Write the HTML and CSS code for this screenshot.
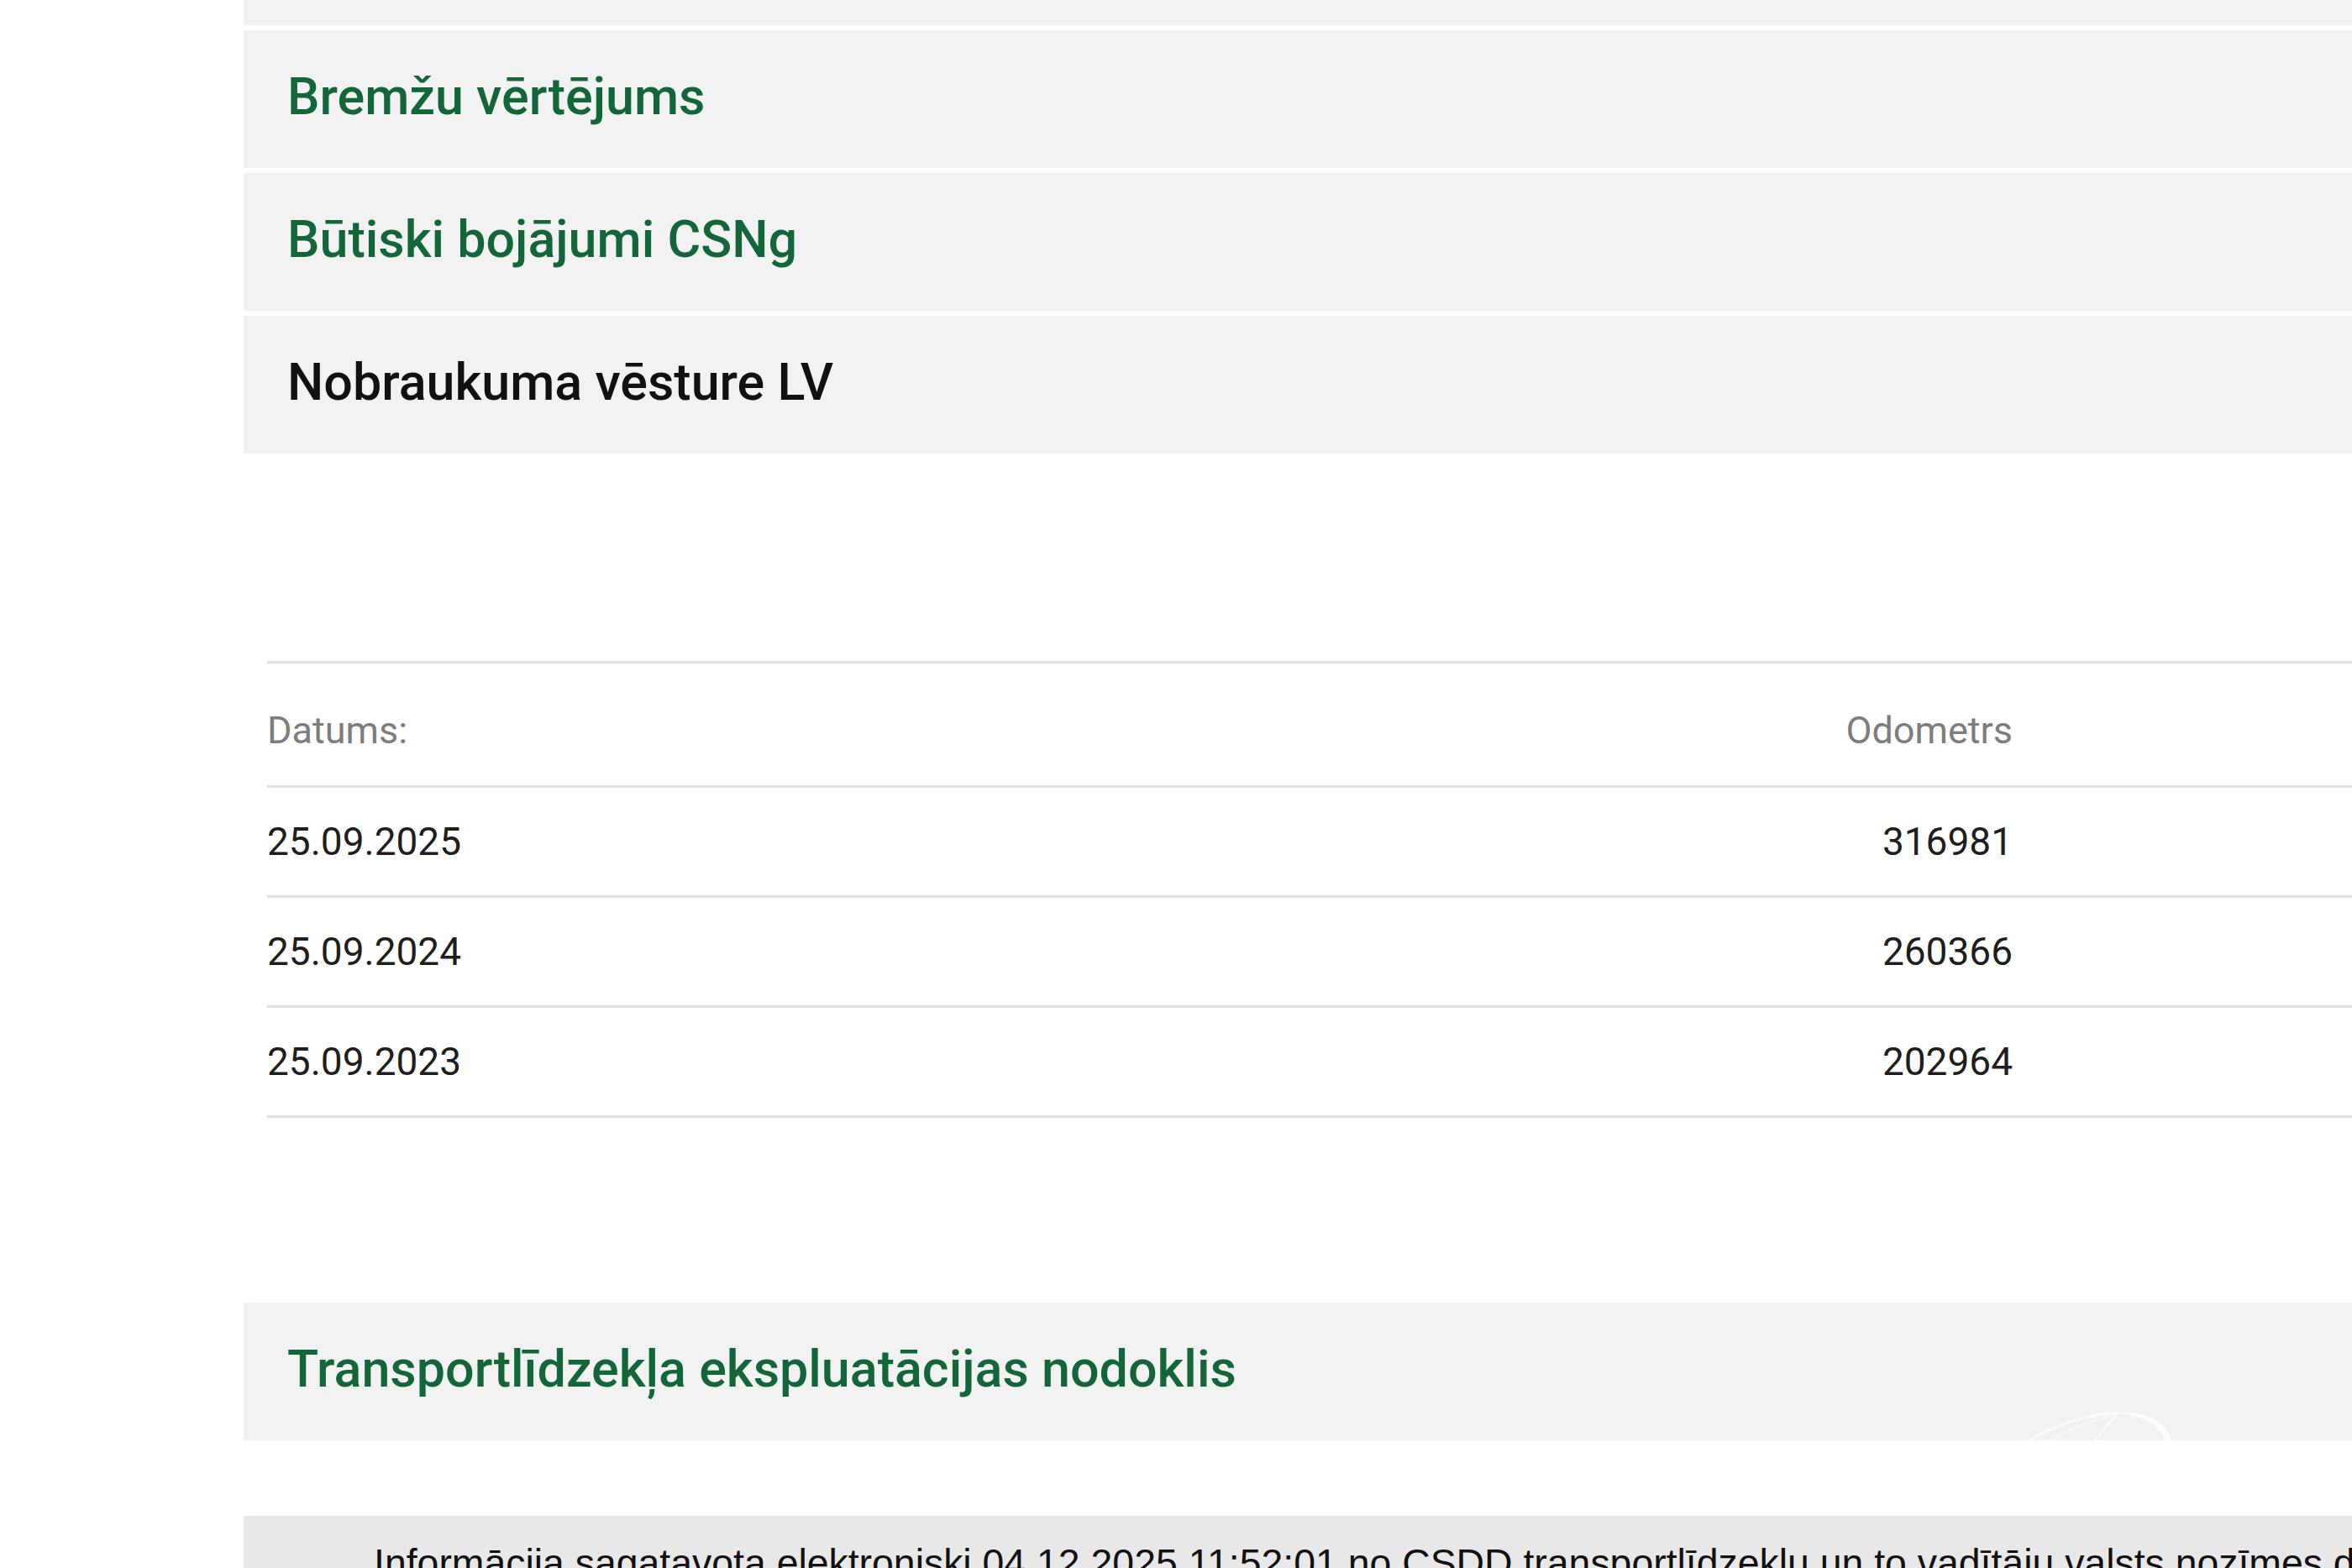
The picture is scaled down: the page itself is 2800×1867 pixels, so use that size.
FILE: index.html
```html
<!DOCTYPE html>
<html lang="lv">
<head>
<meta charset="utf-8">
<title>Nobraukuma vēsture</title>
<link rel="stylesheet" href="styles.css">
</head>
<body>
<div class="page">
  <div class="panel panel-top"></div>
  <div class="panel"><h3 class="panel-title link">Bremžu vērtējums</h3></div>
  <div class="panel"><h3 class="panel-title link">Būtiski bojājumi CSNg</h3></div>
  <div class="panel"><h3 class="panel-title">Nobraukuma vēsture LV</h3></div>

  <section class="mileage">
    <table class="mileage-table">
      <colgroup>
        <col class="col-date">
        <col class="col-odo">
        <col class="col-rest">
      </colgroup>
      <thead>
        <tr><th class="c-date">Datums:</th><th class="c-odo">Odometrs</th><th></th></tr>
      </thead>
      <tbody>
        <tr><td class="c-date">25.09.2025</td><td class="c-odo">316981</td><td></td></tr>
        <tr><td class="c-date">25.09.2024</td><td class="c-odo">260366</td><td></td></tr>
        <tr><td class="c-date">25.09.2023</td><td class="c-odo">202964</td><td></td></tr>
      </tbody>
    </table>
  </section>

  <div class="panel panel-tax">
    <h3 class="panel-title link">Transportlīdzekļa ekspluatācijas nodoklis</h3>
    <svg class="watermark" width="200" height="50" viewBox="0 0 200 50" aria-hidden="true">
      <path d="M8 46 Q 60 12 122 9" fill="none" stroke="#ffffff" stroke-width="3" stroke-opacity="0.7"/>
      <path d="M30 46 Q 75 20 118 12" fill="none" stroke="#ffffff" stroke-width="2" stroke-opacity="0.45"/>
      <path d="M120 9 Q 178 8 184 46 L 176 46 Q 171 17 120 9 Z" fill="#ffffff" fill-opacity="0.75"/>
      <path d="M118 11 L 88 46" fill="none" stroke="#ffffff" stroke-width="2.5" stroke-opacity="0.65"/>
    </svg>
  </div>

  <div class="footer">
    <p class="footer-text">Informācija sagatavota elektroniski 04.12.2025 11:52:01 no CSDD transportlīdzekļu un to vadītāju valsts nozīmes datubāzes</p>
  </div>
</div>
</body>
</html>
```

FILE: styles.css
```css
html, body {
  margin: 0;
  padding: 0;
  background: #ffffff;
}

body {
  width: 2800px;
  height: 1867px;
  overflow: hidden;
  font-family: Roboto, "Liberation Sans", Arial, sans-serif;
}

.page {
  padding-left: 290px;
  display: flex;
  flex-direction: column;
}

.panel {
  background: #f2f2f2;
  height: 164px;
  margin-bottom: 6px;
  padding-left: 52px;
  padding-bottom: 5px;
  display: flex;
  align-items: center;
  box-sizing: border-box;
}

.panel-top {
  height: 30px;
  padding-bottom: 0;
}

.panel-title {
  margin: 0;
  font-family: Roboto, "Liberation Sans", sans-serif;
  font-weight: 500;
  font-size: 61px;
  line-height: 1;
  color: #111111;
  white-space: nowrap;
}

.panel-title.link {
  color: #12663a;
}

.mileage {
  margin-top: 241px;
  padding-left: 28px;
}

.mileage-table {
  width: 2482px;
  table-layout: fixed;
  border-collapse: collapse;
  border-top: 3px solid #e2e2e2;
}

.col-date { width: 1678px; }
.col-odo { width: 400px; }
.col-rest { width: 404px; }

.mileage-table th,
.mileage-table td {
  padding: 0;
  border-bottom: 3px solid #e2e2e2;
  vertical-align: middle;
  white-space: nowrap;
}

.mileage-table th {
  height: 148px;
  padding-top: 14px;
  box-sizing: border-box;
  font-size: 45px;
  font-weight: 400;
  color: #7d7d7d;
  text-align: left;
}

.mileage-table td {
  height: 128px;
  font-size: 46px;
  color: #1e1e1e;
}

.mileage-table .c-odo {
  text-align: right;
}

.panel-tax {
  margin-top: 220px;
  position: relative;
  overflow: hidden;
}

.watermark {
  position: absolute;
  left: 2112px;
  top: 122px;
}

.footer {
  margin-top: 84px;
  background: #e8e8e8;
  padding: 30px 0 0 155px;
  height: 200px;
}

.footer-text {
  margin: 0;
  font-family: "Liberation Sans", Arial, sans-serif;
  font-size: 46.4px;
  line-height: 1.15;
  color: #111111;
  white-space: nowrap;
}
```
